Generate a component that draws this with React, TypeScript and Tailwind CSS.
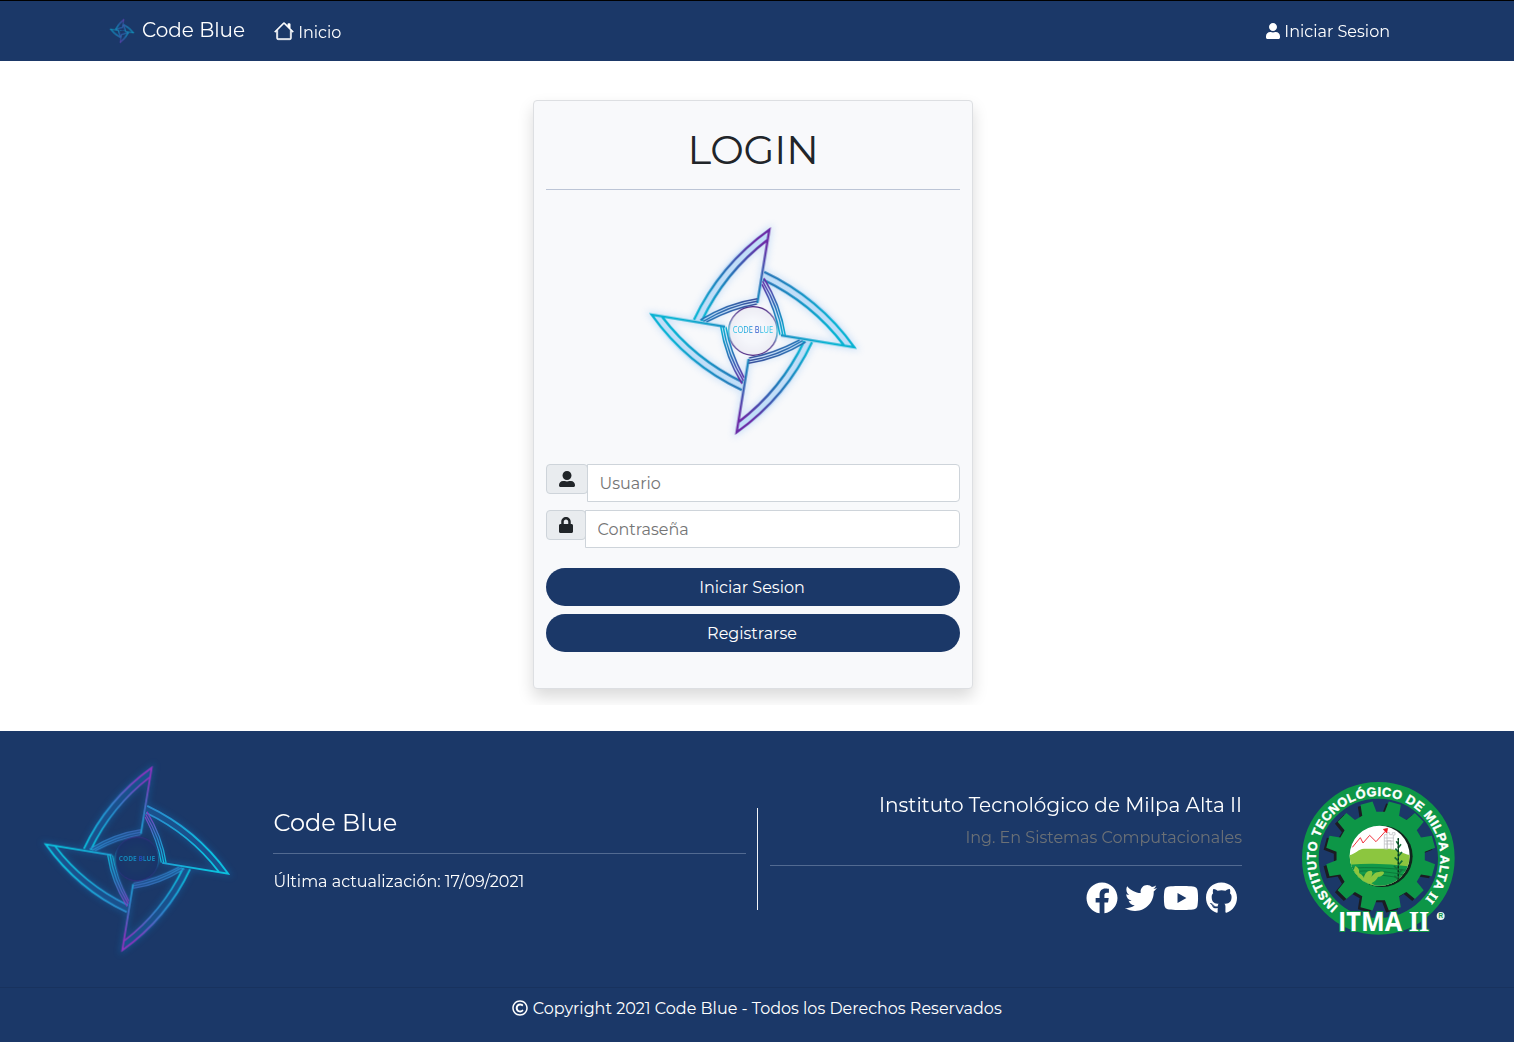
import React from "react";
import {
  FaUser,
  FaUserAlt,
  FaLock,
  FaFacebook,
  FaTwitter,
  FaYoutube,
  FaGithub,
  FaRegCopyright,
} from "react-icons/fa";
import { BsHouse } from "react-icons/bs";

type StarProps = { id: string; className?: string; dark?: boolean; line?: number };

function Blade({ id, kind, line, band }: { id: string; kind: "v" | "h"; line: number; band: string }) {
  return (
    <g fill="none" strokeWidth={line} strokeLinejoin="miter">
      <path
        d="M49 -309Q-110 -205 -177 -34L-154 -30Q-90 -180 43 -273Z"
        fill={band}
        stroke="none"
      />
      <path d="M13 -95Q-75 -80 -154 -33L-140 -27Q-60 -70 12 -83Z" fill={band} stroke="none" />
      <g stroke={`url(#${id}-${kind})`}>
        <path d="M13 -84L49 -304Q-100 -197 -177 -34" />
        <path d="M43 -273Q-84 -176 -154 -30" />
      </g>
      <g stroke={`url(#${id}-${kind}s)`} strokeWidth={line * 0.68}>
        <path d="M13 -97Q-75 -84 -158 -33" />
        <path d="M12 -89Q-68 -77 -149 -29" />
        <path d="M12 -81Q-60 -69 -140 -27" />
      </g>
    </g>
  );
}

function Star({ id, className, dark = false, line = 6 }: StarProps) {
  const cyan = dark ? "#0cc0de" : "#08b2d2";
  const blue = dark ? "#2a8bcd" : "#2377b8";
  const purple = dark ? "#8a35bd" : "#6b2ba6";
  const indigo = dark ? "#3f6cc0" : "#3a4f9c";
  const band = dark ? "#1d76c833" : "#a9d4f880";
  return (
    <svg viewBox="-360 -360 720 720" className={className} aria-hidden="true">
      <defs>
        <linearGradient id={`${id}-v`} gradientUnits="userSpaceOnUse" x1="0" y1="-309" x2="-90" y2="-34">
          <stop offset="0.12" stopColor={purple} />
          <stop offset="0.55" stopColor={blue} />
          <stop offset="1" stopColor={cyan} />
        </linearGradient>
        <linearGradient id={`${id}-h`} gradientUnits="userSpaceOnUse" x1="0" y1="-309" x2="-90" y2="-34">
          <stop offset="0.25" stopColor={cyan} />
          <stop offset="1" stopColor={blue} />
        </linearGradient>
        <linearGradient id={`${id}-vs`} gradientUnits="userSpaceOnUse" x1="13" y1="-90" x2="-154" y2="-30">
          <stop offset="0" stopColor={indigo} />
          <stop offset="1" stopColor={blue} />
        </linearGradient>
        <linearGradient id={`${id}-hs`} gradientUnits="userSpaceOnUse" x1="13" y1="-90" x2="-154" y2="-30">
          <stop offset="0" stopColor={cyan} />
          <stop offset="0.45" stopColor={blue} />
          <stop offset="1" stopColor={purple} />
        </linearGradient>
        <linearGradient id={`${id}-c`} x1="0" y1="0" x2="0" y2="1">
          <stop offset="0" stopColor={dark ? "#4b258b" : "#4d2380"} />
          <stop offset="0.25" stopColor={dark ? "#2b3f8b" : "#4d3c90"} />
          <stop offset="0.5" stopColor={cyan} />
          <stop offset="0.75" stopColor={dark ? "#2b3f8b" : "#4d3c90"} />
          <stop offset="1" stopColor={dark ? "#4b258b" : "#4d2380"} />
        </linearGradient>
        <linearGradient id={`${id}-t`} x1="0" y1="0" x2="1" y2="0">
          <stop offset="0" stopColor={dark ? "#1385b8" : "#2cc3e6"} />
          <stop offset="0.42" stopColor={dark ? "#1385b8" : "#159bd8"} />
          <stop offset="0.6" stopColor={dark ? "#2440b4" : "#3848c8"} />
          <stop offset="0.72" stopColor={dark ? "#1385b8" : "#2cc3e6"} />
          <stop offset="1" stopColor={dark ? "#1385b8" : "#2cc3e6"} />
        </linearGradient>
        <radialGradient id={`${id}-g`}>
          <stop offset="0.5" stopColor={dark ? "#1b3868" : "#f5f6fb"} />
          <stop offset="1" stopColor={dark ? "#1a336a" : "#ececf4"} />
        </radialGradient>
        <filter id={`${id}-b`} x="-20%" y="-20%" width="140%" height="140%">
          <feGaussianBlur stdDeviation="11" />
        </filter>
      </defs>
      <g filter={`url(#${id}-b)`} opacity={dark ? 0.26 : 0.25}>
        {[0, 90, 180, 270].map((a) => (
          <path
            key={a}
            transform={`rotate(${a})`}
            d="M13 -84L49 -304Q-100 -197 -177 -34M43 -273Q-84 -176 -154 -30M13 -90Q-75 -75 -154 -30"
            fill="none"
            stroke={dark ? "#128ee0" : "#4b9cf0"}
            strokeWidth="16"
          />
        ))}
      </g>
      <circle r="73" fill={`url(#${id}-g)`} stroke={`url(#${id}-c)`} strokeWidth={dark ? 2 : 3.5} />
      {[0, 90, 180, 270].map((a) => (
        <g key={a} transform={`rotate(${a})`}>
          <Blade id={id} kind={a % 180 === 0 ? "v" : "h"} line={line} band={band} />
        </g>
      ))}
      <text
        y="7"
        textAnchor="middle"
        textLength="121"
        lengthAdjust="spacingAndGlyphs"
        className={dark ? "font-['Open_Sans'] text-[26px] font-bold" : "font-['Open_Sans'] text-[26px] font-normal"}
        fill={`url(#${id}-t)`}
      >
        CODE BLUE
      </text>
    </svg>
  );
}

function gearPath(cx: number, cy: number) {
  const pts: string[] = [];
  for (let i = 0; i < 12; i++) {
    const mid = -105 + i * 30;
    for (const [da, r] of [[-9.5, 133], [-6.5, 165], [6.5, 165], [9.5, 133]]) {
      const a = ((mid + da) * Math.PI) / 180;
      pts.push(`${(cx + r * Math.cos(a)).toFixed(1)} ${(cy + r * Math.sin(a)).toFixed(1)}`);
    }
  }
  return `M${pts.join("L")}Z`;
}

function Crest({ className }: { className?: string }) {
  return (
    <svg viewBox="0 0 540 540" className={className} role="img" aria-label="ITMA II">
      <defs>
        <path id="crest-arc" d="M145 412A187 187 0 1 1 385 411" />
        <clipPath id="crest-scene">
          <circle cx="269" cy="260" r="90" />
        </clipPath>
      </defs>
      <circle cx="265" cy="268" r="204" fill="none" stroke="#0d9647" strokeWidth="50" />
      <path d={gearPath(264, 267)} fill="#1b1c22" />
      <path d={gearPath(272, 261)} fill="#0d9647" />
      <circle cx="276" cy="262" r="92" fill="#10251c" />
      <g clipPath="url(#crest-scene)">
        <rect x="170" y="160" width="200" height="200" fill="#fff" />
        <path d="M170 260C195 258 203 240 222 239H302C325 243 340 256 370 260V370H170Z" fill="#8cc63f" />
        <path d="M170 288Q270 278 370 294V370H170Z" fill="#12994a" />
        <path d="M175 298Q270 291 365 306M175 309Q270 298 365 323M180 324Q270 305 355 336" stroke="#0a7a3a" strokeWidth="3" fill="none" />
        <path
          d="M225 344C214 340 202 331 199 320C190 312 190 300 196 291C205 294 209 304 207 312C217 316 219 323 222 327C223 315 233 303 245 306C250 313 246 323 239 327C250 319 253 309 267 309C276 307 282 307 282 312C279 321 269 323 264 324C260 333 250 340 244 343L260 352H223Z"
          fill="#8cc63f"
        />
        <g fill="none" stroke="#b6b8bb" strokeWidth="2">
          <path d="M283 240V197H291V191H299V197H307V191H315V198H310V241H303V215H292V241ZM283 207H312M283 216H310M283 225H311M291 197V240" />
        </g>
        <path d="M325 208V350" stroke="#0b5b2c" strokeWidth="4" />
        <path
          d="M325 226L319 217M325 236L333 226M325 248L316 239M325 262L336 249M325 276L314 265M325 288L337 275M325 303L312 291M325 314L337 301M325 330L313 321M325 341L336 328"
          stroke="#14713a"
          strokeWidth="5"
        />
        <path d="M325 208V350" stroke="#09321d" strokeWidth="4" strokeDasharray="5 7" />
      </g>
      <path d="M187 235L211 206L219 222L239 199L258 218L286 187" fill="none" stroke="#f0323d" strokeWidth="3" />
      <path d="M280 181L293 178L290 192Z" fill="#ed1c24" stroke="#ed1c24" strokeWidth="2" />
      <text className="font-['Liberation_Sans'] text-[38px] font-bold" fill="#fff" stroke="#fff" strokeWidth="1.2">
        <textPath href="#crest-arc" textLength="886" lengthAdjust="spacing">
          INSTITUTO TECNOLÓGICO DE MILPA ALTA <tspan className="font-['Liberation_Serif']">II</tspan>
        </textPath>
      </text>
      <g fill="#fff" stroke="#0d9647" strokeWidth="6" paintOrder="stroke">
        <text x="144" y="486" textLength="192" lengthAdjust="spacingAndGlyphs" className="font-['Open_Sans'] text-[78px] font-bold">
          ITMA
        </text>
        <text x="356" y="486" textLength="62" lengthAdjust="spacingAndGlyphs" className="font-['Liberation_Serif'] text-[86px] font-bold">
          II
        </text>
      </g>
      <circle cx="452" cy="441" r="12" fill="#e9f5ef" />
      <text x="452" y="448" textAnchor="middle" className="font-['Liberation_Sans'] text-[19px] font-bold" fill="#0d9647">
        R
      </text>
    </svg>
  );
}

function Header() {
  return (
    <header className="h-[61px] border-t border-black bg-[#1b3868]">
      <nav className="flex h-[60px] items-center justify-between pr-[124px] pl-[108px]">
        <div className="flex items-center">
          <a className="flex items-center" href="#">
            <Star id="nav" dark line={12} className="h-[28px] w-[28px]" />
            <span className="-mt-[2px] ml-1.5 text-xl leading-[30px]">Code Blue</span>
          </a>
          <a className="mt-[2px] ml-[29px] flex items-center" href="#">
            <BsHouse className="-mt-0.5 h-5 w-5" strokeWidth={0.4} />
            <span className="mt-0.5 ml-1 text-base">Inicio</span>
          </a>
        </div>
        <a className="flex items-center" href="#">
          <FaUser className="h-4 w-[14px]" />
          <span className="mt-0.5 ml-1 text-base">Iniciar Sesion</span>
        </a>
      </nav>
    </header>
  );
}

function LoginCard() {
  return (
    <section className="ml-[533px] h-[589px] w-[440px] rounded-[4px] border border-[#dddfe2] bg-[#f8f9fb] px-3 text-[#212529] shadow-[0_8px_16px_rgba(0,0,0,0.15)]">
      <h1 className="mt-[25px] text-center text-[40px] leading-[48px] tracking-[-0.2px]">LOGIN</h1>
      <hr className="mt-[15px] border-[#bcc5d6]" />
      <div className="mt-[21px] flex justify-center">
        <Star id="card" className="h-[240px] w-[240px]" line={7} />
      </div>
      <form className="mt-[13px]" onSubmit={(e) => e.preventDefault()}>
        <div className="flex h-[38px] items-start">
          <span className="flex h-[30px] w-[42px] items-center justify-center rounded-[4px] border border-[#ced4da] bg-[#e9ecef]">
            <FaUserAlt className="h-4 w-4" />
          </span>
          <input
            className="-ml-px h-[38px] min-w-0 flex-1 rounded-r-[4px] border border-[#ced4da] bg-white px-[11.5px] text-base placeholder:text-[#757575]"
            placeholder="Usuario"
          />
        </div>
        <div className="mt-2 flex h-[38px] items-start">
          <span className="flex h-[30px] w-[40px] items-center justify-center rounded-[4px] border border-[#ced4da] bg-[#e9ecef]">
            <FaLock className="h-4 w-[14px]" />
          </span>
          <input
            type="text"
            className="-ml-px h-[38px] min-w-0 flex-1 rounded-r-[4px] border border-[#ced4da] bg-white px-[11.5px] text-base placeholder:text-[#757575]"
            placeholder="Contraseña"
          />
        </div>
        <button className="mt-5 block h-[38px] w-full rounded-full bg-[#1b3868] pt-0.5 pr-0.5 text-base text-white">
          Iniciar Sesion
        </button>
        <button className="mt-2 block h-[38px] w-full rounded-full bg-[#1b3868] pt-0.5 pr-0.5 text-base text-white">
          Registrarse
        </button>
      </form>
    </section>
  );
}

function Footer() {
  return (
    <footer className="h-[311px] bg-[#1b3868]">
      <div className="flex h-[256px] items-center">
        <Star id="foot" dark className="ml-[29px] h-[216px] w-[216px]" line={6} />
        <div className="mb-4 ml-7 w-[473px]">
          <h2 className="pl-[0.5px] text-2xl leading-7">Code Blue</h2>
          <hr className="mt-4 border-[#526a91]" />
          <p className="mt-4 pl-[0.5px] text-base leading-6">Última actualización: 17/09/2021</p>
        </div>
        <div className="ml-[11px] h-[102px] w-px bg-[#f2f4f7]" />
        <div className="mb-3 ml-3 w-[472px] text-right">
          <h3 className="text-xl leading-6">Instituto Tecnológico de Milpa Alta II</h3>
          <p className="mt-[9px] text-base leading-6 text-[#6c7176]">Ing. En Sistemas Computacionales</p>
          <hr className="mt-[15px] border-[#526a91]" />
          <div className="mt-4 mr-1 flex justify-end">
            <FaFacebook className="h-8 w-8" />
            <FaTwitter className="ml-[7px] h-8 w-8" />
            <FaYoutube className="ml-[6px] h-8 w-9" />
            <FaGithub className="mr-px ml-[7px] h-8 w-[31px]" />
          </div>
        </div>
        <Crest className="ml-12 h-[180px] w-[180px]" />
      </div>
      <div className="flex h-[55px] justify-center border-t border-[#18325e] pt-2">
        <p className="flex h-6 items-center">
          <FaRegCopyright className="h-4 w-4" />
          <span className="mt-0.5 ml-[4.5px] text-base">Copyright 2021 Code Blue - Todos los Derechos Reservados</span>
        </p>
      </div>
    </footer>
  );
}

export default function App() {
  return (
    <div className="h-[1042px] w-full overflow-hidden bg-white font-['Montserrat','Inter',sans-serif] text-white">
      <Header />
      <main className="mb-[26px] h-[644px] overflow-hidden pt-[39px]">
        <LoginCard />
      </main>
      <Footer />
    </div>
  );
}
